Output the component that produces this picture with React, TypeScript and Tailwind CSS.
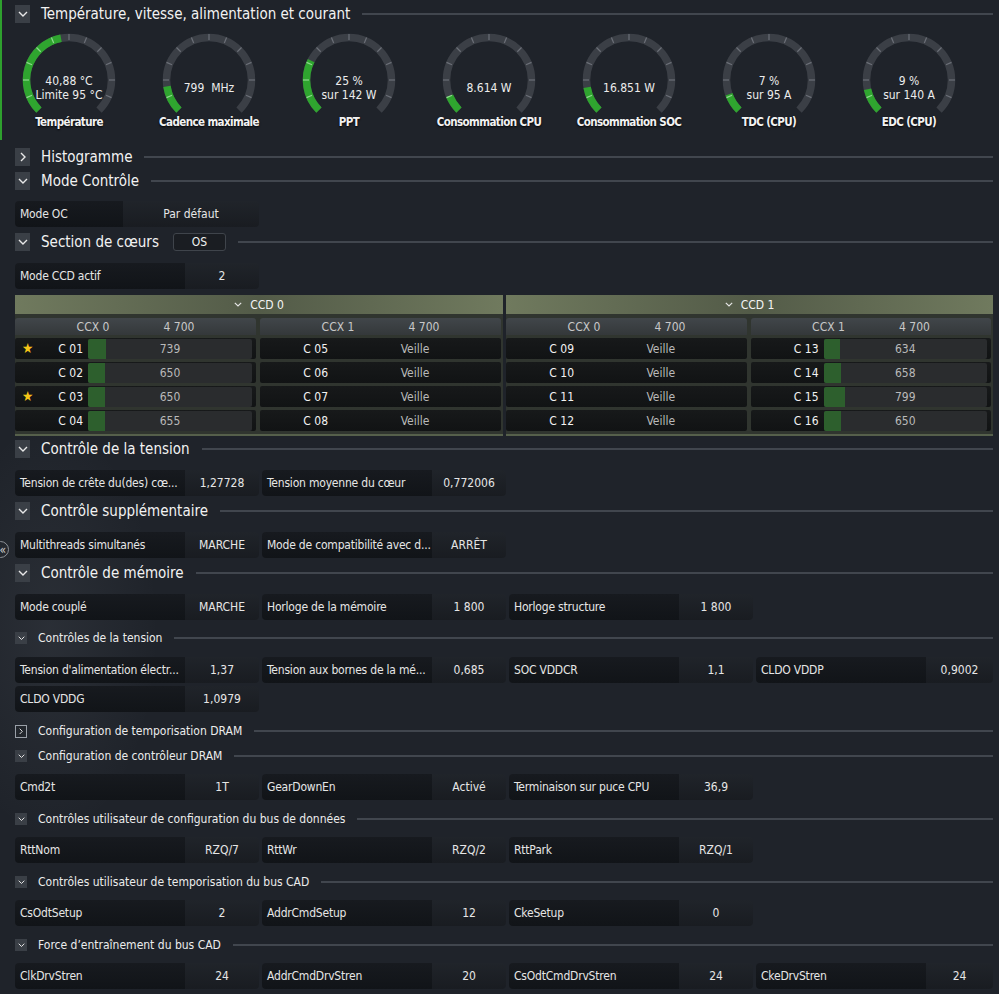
import React from "react";

type GaugeProps = { lines: string[]; label: string; frac: number };

function polar(cx: number, cy: number, r: number, deg: number): [number, number] {
  const a = (deg * Math.PI) / 180;
  return [cx + r * Math.sin(a), cy - r * Math.cos(a)];
}

function arcPath(cx: number, cy: number, r: number, a0: number, a1: number) {
  const [x0, y0] = polar(cx, cy, r, a0);
  const [x1, y1] = polar(cx, cy, r, a1);
  const large = a1 - a0 > 180 ? 1 : 0;
  return `M${x0} ${y0} A${r} ${r} 0 ${large} 1 ${x1} ${y1}`;
}

function Gauge({ lines, label, frac }: GaugeProps) {
  const cx = 50;
  const cy = 50;
  const r = 42.5;
  const end = -135 + 270 * frac;
  const ticks = Array.from({ length: 13 }, (_, i) => -135 + i * 22.5);
  return (
    <div className="flex w-[140px] flex-col items-center">
      <div className="relative h-[84px] w-[100px]">
        <svg width="100" height="84" viewBox="0 0 100 84">
          <path d={arcPath(cx, cy, r, -135, 135)} stroke="#3b3f46" strokeWidth="7.5" fill="none" />
          <path d={arcPath(cx, cy, r, -135, end)} stroke="#2fa52f" strokeWidth="7.5" fill="none" />
          {ticks.map((t, i) => {
            const [x0, y0] = polar(cx, cy, r - 2.5, t);
            const [x1, y1] = polar(cx, cy, r + 3.5, t);
            const on = t <= end;
            if (i === 0 || i === 12) return null;
            return (
              <line
                key={i}
                x1={x0}
                y1={y0}
                x2={x1}
                y2={y1}
                stroke={on ? "#8fd88f" : "#6c7078"}
                strokeWidth="1.2"
              />
            );
          })}
        </svg>
        <div className="absolute left-0 right-0 top-[58px] flex -translate-y-1/2 flex-col items-center text-[12px] leading-[14px] text-[#ececec]">
          {lines.map((l) => (
            <span key={l} className="whitespace-pre">
              {l}
            </span>
          ))}
        </div>
      </div>
      <div className="h-[16px] whitespace-nowrap text-[11.5px] font-bold leading-[16px] tracking-[-0.6px] text-[#f2f2f2] [text-shadow:0_1px_2px_#000]">
        {label}
      </div>
    </div>
  );
}

function ChevronDown({ size = 10 }: { size?: number }) {
  return (
    <svg width={size} height={size * 0.6} viewBox="0 0 10 6">
      <path d="M1 1 L5 5 L9 1" stroke="#e8e8e8" strokeWidth="1.4" fill="none" />
    </svg>
  );
}

function ChevronRight({ size = 6 }: { size?: number }) {
  return (
    <svg width={size} height={size * 1.67} viewBox="0 0 6 10">
      <path d="M1 1 L5 5 L1 9" stroke="#e8e8e8" strokeWidth="1.4" fill="none" />
    </svg>
  );
}

function Header({
  title,
  open = true,
  extra,
}: {
  title: string;
  open?: boolean;
  extra?: React.ReactNode;
}) {
  return (
    <div className="flex h-[22px] items-center pr-[6px]">
      <div className="flex h-[18px] w-[15px] items-center justify-center bg-[#3a3f46]">
        {open ? <ChevronDown /> : <ChevronRight />}
      </div>
      <span className="ml-[11px] whitespace-nowrap text-[15px] leading-[22px] text-[#f2f2f2]">{title}</span>
      {extra}
      <div className="ml-[12px] h-[2px] flex-1 bg-[#41464e]" />
    </div>
  );
}

function SubHeader({ title, open = true, outlined = false }: { title: string; open?: boolean; outlined?: boolean }) {
  return (
    <div className="flex h-[18px] items-center pr-[6px]">
      {outlined ? (
        <div className="flex h-[13px] w-[12px] items-center justify-center border border-[#9aa0a8] bg-[#23272d]">
          <ChevronRight size={4} />
        </div>
      ) : (
        <div className="flex h-[12px] w-[12px] items-center justify-center bg-[#3a3f46]">
          {open ? <ChevronDown size={7} /> : <ChevronRight size={4} />}
        </div>
      )}
      <span className="ml-[11px] whitespace-nowrap text-[12px] leading-[18px] text-[#ececec]">{title}</span>
      <div className="ml-[12px] h-[2px] flex-1 bg-[#41464e]" />
    </div>
  );
}

function Cell({ label, value, narrow = false }: { label: string; value: string; narrow?: boolean }) {
  return (
    <div className="flex h-[26px] overflow-hidden rounded-[4px] text-[12px] leading-[26px] text-[#e6e6e6]">
      <div
        className={`${narrow ? "w-[108px]" : "w-[170px]"} shrink-0 overflow-hidden whitespace-nowrap bg-gradient-to-b from-[#171a1f] to-[#111418] pl-[5px] tracking-[-0.2px]`}
      >
        {label}
      </div>
      <div className="flex-1 whitespace-nowrap bg-gradient-to-b from-[#20242a] to-[#191c21] text-center">{value}</div>
    </div>
  );
}

function Row({ cells }: { cells: [string, string][] }) {
  return (
    <div className="grid grid-cols-[244px_244px_244px_237px] gap-x-[3px]">
      {cells.map(([l, v]) => (
        <Cell key={l} label={l} value={v} />
      ))}
    </div>
  );
}

type CoreRow = { star?: boolean; name: string; value: string; fill?: number };

function CcxPanel({ title, rows }: { title: string; rows: CoreRow[] }) {
  return (
    <div className="flex flex-col">
      <div className="flex h-[17px] items-center rounded-t-[3px] bg-gradient-to-b from-[#41464a] to-[#34383a] text-[12px] text-[#c8c8c8]">
        <span className="ml-[48px] w-[60px] text-center">{title}</span>
        <span className="ml-[32px] w-[48px] whitespace-nowrap text-center">4 700</span>
      </div>
      <div className="mt-[3px] flex flex-col gap-[3px]">
        {rows.map((r) => (
          <div
            key={r.name}
            className="flex h-[21px] items-center rounded-[2px] bg-gradient-to-b from-[#17191a] to-[#111314] text-[12px]"
          >
            <div className="relative flex h-full w-[73px] shrink-0 items-center justify-end pr-[5px] text-[#f2f2f2]">
              {r.star && <span className="absolute left-[7px] top-[1px] text-[14px] leading-[19px] text-[#f5c518]">★</span>}
              {r.name}
            </div>
            {r.fill !== undefined ? (
              <div className="relative mr-[4px] flex h-[20px] flex-1 items-center justify-center overflow-hidden rounded-[2px] bg-[#2a2c2e] text-[#b9b9b9]">
                <div className="absolute left-0 top-0 h-full bg-[#2d5f2d]" style={{ width: `${r.fill}px` }} />
                <span className="relative">{r.value}</span>
              </div>
            ) : (
              <div className="mr-[4px] flex-1 text-center text-[#b9b9b9]">{r.value}</div>
            )}
          </div>
        ))}
      </div>
    </div>
  );
}

function CcdPanel({ name, left, right }: { name: string; left: CoreRow[]; right: CoreRow[] }) {
  return (
    <div className="flex flex-col bg-[#30352f]">
      <div className="flex h-[19px] items-center justify-center gap-[8px] bg-gradient-to-r from-[#707a5e] via-[#535b48] to-[#707a5e] text-[12px] text-[#f4f4f4]">
        <ChevronDown size={8} />
        <span>{name}</span>
      </div>
      <div className="grid grid-cols-2 gap-[4px] border-b-[2px] border-[#56604b] pb-[3px] pr-[2px] pt-[4px]">
        <CcxPanel title="CCX 0" rows={left} />
        <CcxPanel title="CCX 1" rows={right} />
      </div>
    </div>
  );
}

const veille = (names: string[]): CoreRow[] => names.map((n) => ({ name: n, value: "Veille" }));

export default function App() {
  const gauges: GaugeProps[] = [
    { lines: ["40,88 °C", "Limite 95 °C"], label: "Température", frac: 0.46 },
    { lines: ["799  MHz"], label: "Cadence maximale", frac: 0.135 },
    { lines: ["25 %", "sur 142 W"], label: "PPT", frac: 0.267 },
    { lines: ["8.614 W"], label: "Consommation CPU", frac: 0.085 },
    { lines: ["16.851 W"], label: "Consommation SOC", frac: 0.13 },
    { lines: ["7 %", "sur 95 A"], label: "TDC (CPU)", frac: 0.094 },
    { lines: ["9 %", "sur 140 A"], label: "EDC (CPU)", frac: 0.12 },
  ];

  return (
    <div className="relative h-[994px] w-[999px] overflow-hidden bg-[#1f232a] font-['DejaVu_Sans_Condensed','DejaVu_Sans',sans-serif] text-[#e6e6e6]">
      <div className="pointer-events-none absolute left-[-60px] top-[420px] h-[420px] w-[220px] bg-[radial-gradient(ellipse_at_center,rgba(190,200,210,0.07),transparent_70%)]" />
      <div className="absolute left-0 top-0 h-[140px] w-[2px] bg-[#2ea02e]" />
      <div className="absolute left-[-8px] top-[541px] flex h-[17px] w-[17px] items-center justify-end rounded-full border border-[#8d9197] pr-[2px] text-[12px] leading-none text-[#d0d0d0]">
        «
      </div>

      <div className="relative flex flex-col pl-[15px] pt-[3px]">
        <Header title="Température, vitesse, alimentation et courant" />
        <div className="-ml-[16px] flex pt-[5px]">
          {gauges.map((g) => (
            <Gauge key={g.label} {...g} />
          ))}
        </div>

        <div className="mt-[16px]">
          <Header title="Histogramme" open={false} />
        </div>
        <div className="mt-[2px]">
          <Header title="Mode Contrôle" />
        </div>
        <div className="mt-[9px] w-[244px]">
          <Cell label="Mode OC" value="Par défaut" narrow />
        </div>
        <div className="mt-[4px]">
          <Header
            title="Section de cœurs"
            extra={
              <div className="ml-[14px] flex h-[18px] w-[53px] items-center justify-center rounded-[3px] border border-[#3f444b] bg-[#1a1d22] text-[12px] text-[#f0f0f0]">
                OS
              </div>
            }
          />
        </div>
        <div className="mt-[10px] w-[244px]">
          <Cell label="Mode CCD actif" value="2" />
        </div>

        <div className="mt-[6px] grid grid-cols-[488px_487px] gap-[3px]">
          <CcdPanel
            name="CCD 0"
            left={[
              { star: true, name: "C 01", value: "739", fill: 18 },
              { name: "C 02", value: "650", fill: 17 },
              { star: true, name: "C 03", value: "650", fill: 17 },
              { name: "C 04", value: "655", fill: 17 },
            ]}
            right={veille(["C 05", "C 06", "C 07", "C 08"])}
          />
          <CcdPanel
            name="CCD 1"
            left={veille(["C 09", "C 10", "C 11", "C 12"])}
            right={[
              { name: "C 13", value: "634", fill: 16 },
              { name: "C 14", value: "658", fill: 17 },
              { name: "C 15", value: "799", fill: 21 },
              { name: "C 16", value: "650", fill: 17 },
            ]}
          />
        </div>

        <div className="mt-[2px]">
          <Header title="Contrôle de la tension" />
        </div>
        <div className="mt-[10px]">
          <Row
            cells={[
              ["Tension de crête du(des) cœ...", "1,27728"],
              ["Tension moyenne du cœur", "0,772006"],
            ]}
          />
        </div>

        <div className="mt-[4px]">
          <Header title="Contrôle supplémentaire" />
        </div>
        <div className="mt-[10px]">
          <Row
            cells={[
              ["Multithreads simultanés", "MARCHE"],
              ["Mode de compatibilité avec d...", "ARRÊT"],
            ]}
          />
        </div>

        <div className="mt-[4px]">
          <Header title="Contrôle de mémoire" />
        </div>
        <div className="mt-[10px]">
          <Row
            cells={[
              ["Mode couplé", "MARCHE"],
              ["Horloge de la mémoire", "1 800"],
              ["Horloge structure", "1 800"],
            ]}
          />
        </div>

        <div className="mt-[9px]">
          <SubHeader title="Contrôles de la tension" />
        </div>
        <div className="mt-[10px]">
          <Row
            cells={[
              ["Tension d'alimentation électr...", "1,37"],
              ["Tension aux bornes de la mé...", "0,685"],
              ["SOC VDDCR", "1,1"],
              ["CLDO VDDP", "0,9002"],
            ]}
          />
        </div>
        <div className="mt-[3px]">
          <Row cells={[["CLDO VDDG", "1,0979"]]} />
        </div>

        <div className="mt-[10px]">
          <SubHeader title="Configuration de temporisation DRAM" outlined />
        </div>
        <div className="mt-[7px]">
          <SubHeader title="Configuration de contrôleur DRAM" />
        </div>
        <div className="mt-[9px]">
          <Row
            cells={[
              ["Cmd2t", "1T"],
              ["GearDownEn", "Activé"],
              ["Terminaison sur puce CPU", "36,9"],
            ]}
          />
        </div>

        <div className="mt-[10px]">
          <SubHeader title="Contrôles utilisateur de configuration du bus de données" />
        </div>
        <div className="mt-[9px]">
          <Row
            cells={[
              ["RttNom", "RZQ/7"],
              ["RttWr", "RZQ/2"],
              ["RttPark", "RZQ/1"],
            ]}
          />
        </div>

        <div className="mt-[10px]">
          <SubHeader title="Contrôles utilisateur de temporisation du bus CAD" />
        </div>
        <div className="mt-[9px]">
          <Row
            cells={[
              ["CsOdtSetup", "2"],
              ["AddrCmdSetup", "12"],
              ["CkeSetup", "0"],
            ]}
          />
        </div>

        <div className="mt-[10px]">
          <SubHeader title="Force d’entraînement du bus CAD" />
        </div>
        <div className="mt-[9px]">
          <Row
            cells={[
              ["ClkDrvStren", "24"],
              ["AddrCmdDrvStren", "20"],
              ["CsOdtCmdDrvStren", "24"],
              ["CkeDrvStren", "24"],
            ]}
          />
        </div>
      </div>
    </div>
  );
}
